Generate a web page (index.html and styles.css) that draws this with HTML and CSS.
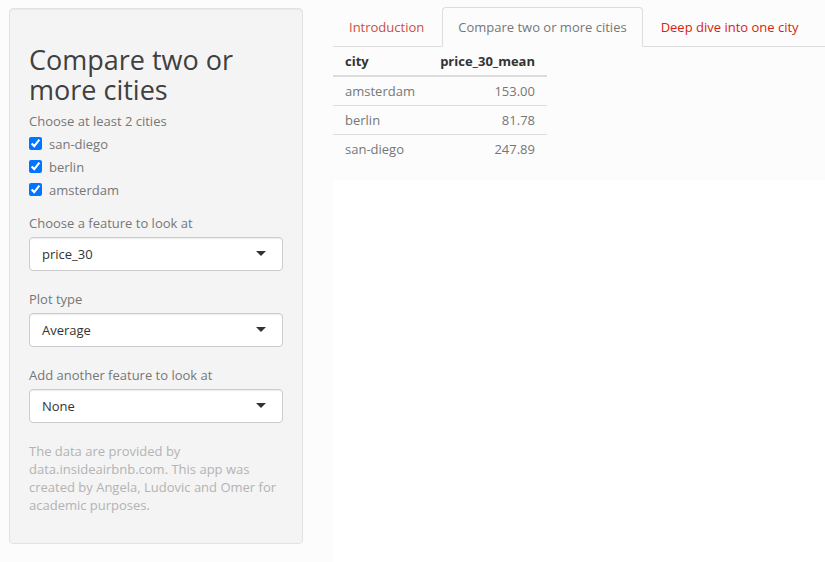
FILE: index.html
```html
<!DOCTYPE html>
<html>
<head>
<meta charset="utf-8">
<link rel="stylesheet" href="styles.css">
</head>
<body>
<div class="page">
  <aside class="well">
    <h2 class="title">Compare two or more cities</h2>
    <div class="group-label">Choose at least 2 cities</div>
    <div class="checks">
      <label class="check"><input type="checkbox" checked><span>san-diego</span></label>
      <label class="check"><input type="checkbox" checked><span>berlin</span></label>
      <label class="check"><input type="checkbox" checked><span>amsterdam</span></label>
    </div>
    <div class="field first">
      <div class="label">Choose a feature to look at</div>
      <div class="select"><span>price_30</span><i class="caret"></i></div>
    </div>
    <div class="field">
      <div class="label">Plot type</div>
      <div class="select"><span>Average</span><i class="caret"></i></div>
    </div>
    <div class="field">
      <div class="label">Add another feature to look at</div>
      <div class="select"><span>None</span><i class="caret"></i></div>
    </div>
    <p class="note">The data are provided by data.insideairbnb.com. This app was created by Angela, Ludovic and Omer for academic purposes.</p>
  </aside>
  <main class="main">
    <ul class="tabs">
      <li class="tab"><a class="intro">Introduction</a></li>
      <li class="tab active"><a>Compare two or more cities</a></li>
      <li class="tab"><a>Deep dive into one city</a></li>
    </ul>
    <table class="data">
      <thead>
        <tr><th class="l">city</th><th class="r">price_30_mean</th></tr>
      </thead>
      <tbody>
        <tr><td class="l">amsterdam</td><td class="r">153.00</td></tr>
        <tr><td class="l">berlin</td><td class="r">81.78</td></tr>
        <tr><td class="l">san-diego</td><td class="r">247.89</td></tr>
      </tbody>
    </table>
    <div class="plot"></div>
  </main>
</div>
</body>
</html>
```

FILE: styles.css
```css
html, body {
  margin: 0;
  padding: 0;
  height: 100%;
  overflow: hidden;
}
body {
  background: #fcfcfc;
  font-family: "Open Sans", "DejaVu Sans", sans-serif;
  font-size: 13px;
  line-height: 18px;
  color: #777777;
}
.page {
  display: flex;
  align-items: flex-start;
}
.well {
  box-sizing: border-box;
  width: 294px;
  margin: 8px 0 0 9px;
  padding: 19px;
  background: #f4f4f4;
  border: 1px solid #e3e3e3;
  border-radius: 4px;
  box-shadow: inset 0 1px 1px rgba(0,0,0,0.05);
  display: flex;
  flex-direction: column;
}
.title {
  margin: 17px 0 8px;
  font-size: 27px;
  line-height: 29.7px;
  font-weight: 400;
  color: #404040;
}
.group-label {
  color: #777;
}
.checks {
  margin-top: 2px;
  display: flex;
  flex-direction: column;
}
.check {
  height: 23px;
  display: flex;
  align-items: center;
  color: #777;
}
.check input {
  margin: 0 7px 0 0;
  width: 13px;
  height: 13px;
}
.field {
  margin-top: 19px;
  display: flex;
  flex-direction: column;
  gap: 5px;
}
.field.first {
  margin-top: 12.5px;
}
.label {
  color: #777;
}
.select {
  box-sizing: border-box;
  height: 34px;
  padding: 0 12px;
  background: #ffffff;
  border: 1px solid #cccccc;
  border-radius: 4px;
  box-shadow: inset 0 1px 1px rgba(0,0,0,0.075);
  display: flex;
  align-items: center;
  justify-content: space-between;
  color: #333333;
}
.caret {
  width: 0;
  height: 0;
  border-left: 5px solid transparent;
  border-right: 5px solid transparent;
  border-top: 5px solid #333333;
  margin-right: 4px;
}
.note {
  margin: 19px 0 10px;
  color: #b3b3b3;
}
.main {
  flex: 1;
  margin-left: 30px;
  display: flex;
  flex-direction: column;
}
.tabs {
  list-style: none;
  margin: 7px 0 0;
  padding: 0;
  display: flex;
  border-bottom: 1px solid #dddddd;
}
.tab {
  margin: 0 2px -1px 0;
}
.tab a {
  display: block;
  padding: 10px 15px;
  line-height: 18px;
  border: 1px solid transparent;
  border-radius: 4px 4px 0 0;
  color: #d9230f;
}
.tab a.intro {
  color: #c9513c;
}
.tab.active a {
  color: #777777;
  background: #fcfcfc;
  border-color: #dddddd;
  border-bottom-color: transparent;
}
.data {
  border-collapse: collapse;
  width: 214px;
  margin-bottom: 17px;
}
.data th, .data td {
  padding: 5px 12px;
  line-height: 18px;
}
.data th {
  color: #333333;
  font-weight: 700;
  border-bottom: 2px solid #dddddd;
}
.data td {
  border-top: 1px solid #dddddd;
}
.data tbody tr:first-child td {
  border-top: 0;
}
.l { text-align: left; }
.r { text-align: right; }
.plot {
  height: 400px;
  background: #ffffff;
}
```
